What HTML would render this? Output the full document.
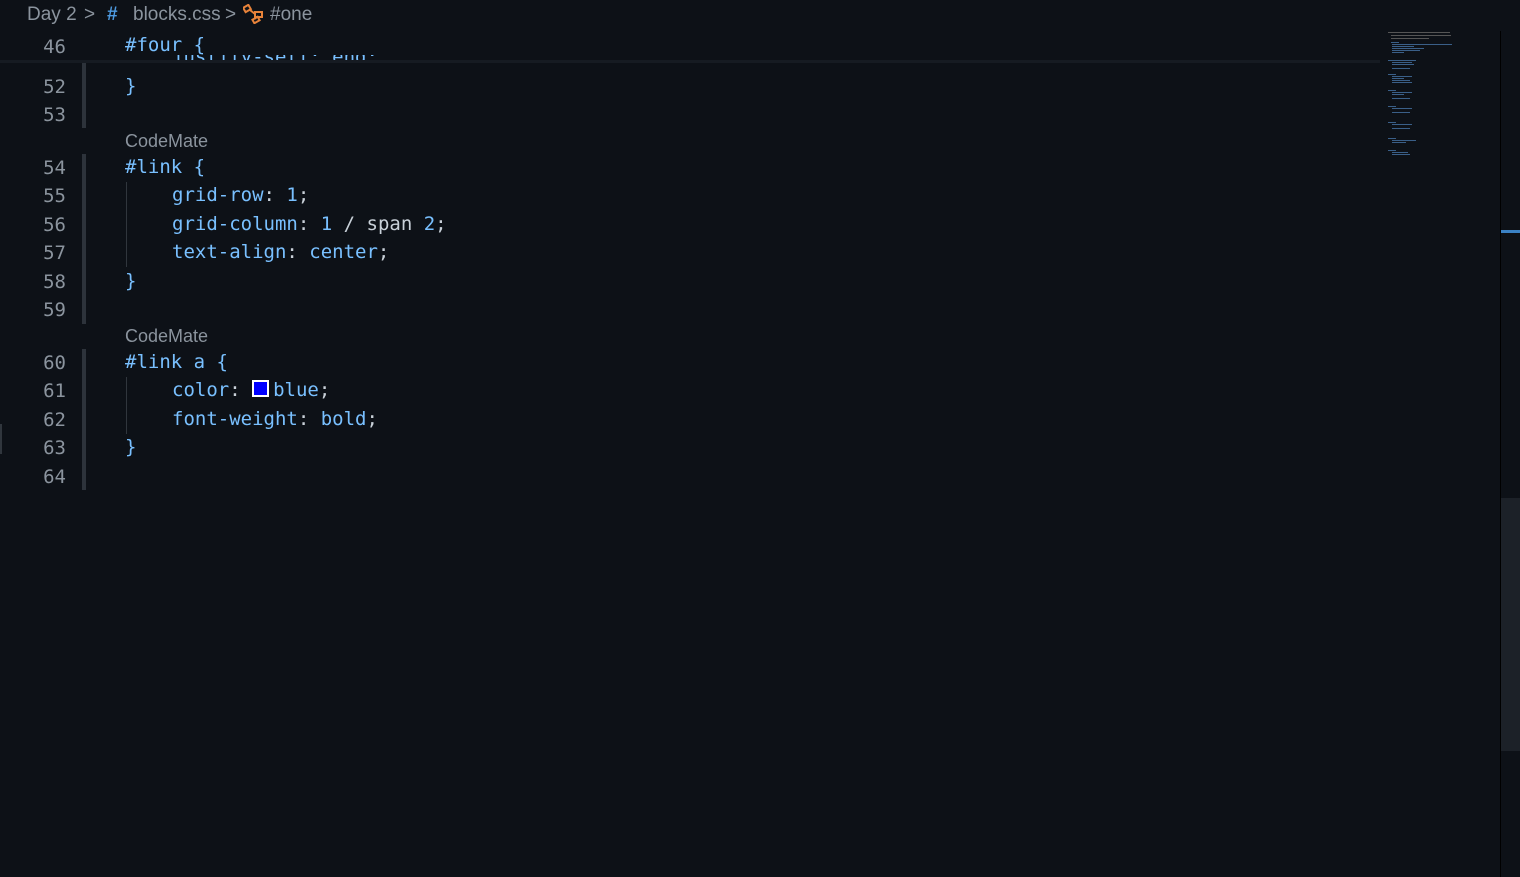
<!DOCTYPE html>
<html><head><style>
body{margin:0;width:1520px;height:877px;background:#0d1117;overflow:hidden;position:relative;font-family:"DejaVu Sans Mono","Liberation Mono",monospace;}
.bc{position:absolute;top:4px;font:19px "Liberation Sans",sans-serif;color:#8b949e;white-space:pre;}
.ln{position:absolute;left:20px;width:46px;text-align:right;font-size:19px;color:#8b949e;}
.c{position:absolute;left:125px;font-size:19px;white-space:pre;color:#c9d1d9;}
.s{color:#79c0ff}.p{color:#79c0ff}.v{color:#79c0ff}
.cm{position:absolute;left:125px;font:18px "Liberation Sans",sans-serif;color:#8b949e;}
.bar{position:absolute;left:82px;width:4px;background:#2d333b;}
.g{position:absolute;left:126px;width:1px;background:#30363d;}
.mm{position:absolute;height:1px;background:#3a5f88;}
</style></head><body>
<div class="c" style="left:172px;top:46px;color:#79c0ff">justify-self: end;</div>
<div style="position:absolute;left:0;top:0;width:1380px;height:55px;background:#0d1117"></div>
<div style="position:absolute;left:0;right:140px;top:60px;height:3px;background:#161b22"></div>
<div style="position:absolute;left:0;right:140px;top:63px;height:20px;background:#0d1117"></div>
<div class="bc" style="left:27px">Day 2</div>
<div class="bc" style="left:84px">&gt;</div>
<div class="bc" style="left:107px;color:#4d9ae0;font-weight:bold">#</div>
<div class="bc" style="left:133px">blocks.css</div>
<div class="bc" style="left:225px">&gt;</div>
<svg style="position:absolute;left:243px;top:4px" width="22" height="20" viewBox="0 0 22 20" fill="none" stroke="#e8833a" stroke-width="2"><rect x="1" y="2" width="6" height="5" transform="rotate(-30 4 4.5)"/><rect x="12" y="8" width="7" height="5"/><rect x="10" y="14" width="6" height="4" transform="rotate(-30 13 16)"/><path d="M7 6 L12 10 M13 13 L12 15"/></svg>
<div class="bc" style="left:270px">#one</div>
<div class="ln" style="top:36px">46</div><div class="c s" style="top:34px">#four {</div>
<div class="bar" style="top:63px;height:65px"></div>
<div class="ln" style="top:76px">52</div><div class="c" style="top:75px;color:#79c0ff">}</div>
<div class="ln" style="top:104px">53</div>
<div class="cm" style="top:131px">CodeMate</div>
<div class="bar" style="top:154px;height:170px"></div>
<div class="g" style="top:182px;height:85px"></div>
<div class="ln" style="top:157px">54</div><div class="c s" style="top:156px">#link {</div>
<div class="ln" style="top:185px">55</div><div class="c" style="top:184px;left:172px"><span class="p">grid-row</span>: <span class="v">1</span>;</div>
<div class="ln" style="top:214px">56</div><div class="c" style="top:213px;left:172px"><span class="p">grid-column</span>: <span class="v">1</span> / span <span class="v">2</span>;</div>
<div class="ln" style="top:242px">57</div><div class="c" style="top:241px;left:172px"><span class="p">text-align</span>: <span class="v">center</span>;</div>
<div class="ln" style="top:271px">58</div><div class="c" style="top:270px;color:#79c0ff">}</div>
<div class="ln" style="top:299px">59</div>
<div class="cm" style="top:326px">CodeMate</div>
<div class="bar" style="top:349px;height:141px"></div>
<div class="g" style="top:377px;height:57px"></div>
<div class="ln" style="top:352px">60</div><div class="c s" style="top:351px">#link a {</div>
<div class="ln" style="top:380px">61</div><div class="c" style="top:379px;left:172px"><span class="p">color</span>: <span style="display:inline-block;width:13px;height:13px;background:#00f;border:2px solid #fff;vertical-align:-1px;margin-right:4px"></span><span class="v">blue</span>;</div>
<div class="ln" style="top:409px">62</div><div class="c" style="top:408px;left:172px"><span class="p">font-weight</span>: <span class="v">bold</span>;</div>
<div class="ln" style="top:437px">63</div><div class="c" style="top:436px;color:#79c0ff">}</div>
<div class="ln" style="top:466px">64</div>
<div class="mm" style="left:1388px;top:32px;width:62px;background:#555"></div>
<div class="mm" style="left:1391px;top:35px;width:60px;background:#555"></div>
<div class="mm" style="left:1391px;top:38px;width:38px;background:#555"></div>
<div class="mm" style="left:1391px;top:42px;width:8px"></div>
<div class="mm" style="left:1392px;top:44px;width:60px"></div>
<div class="mm" style="left:1392px;top:46px;width:22px"></div>
<div class="mm" style="left:1392px;top:48px;width:32px"></div>
<div class="mm" style="left:1392px;top:50px;width:28px"></div>
<div class="mm" style="left:1392px;top:52px;width:12px"></div>
<div class="mm" style="left:1388px;top:60px;width:28px"></div>
<div class="mm" style="left:1392px;top:62px;width:20px"></div>
<div class="mm" style="left:1392px;top:64px;width:22px"></div>
<div class="mm" style="left:1392px;top:68px;width:18px"></div>
<div class="mm" style="left:1388px;top:74px;width:8px"></div>
<div class="mm" style="left:1392px;top:76px;width:20px"></div>
<div class="mm" style="left:1392px;top:78px;width:12px"></div>
<div class="mm" style="left:1392px;top:80px;width:18px"></div>
<div class="mm" style="left:1392px;top:82px;width:20px"></div>
<div class="mm" style="left:1388px;top:90px;width:8px"></div>
<div class="mm" style="left:1392px;top:92px;width:20px"></div>
<div class="mm" style="left:1392px;top:94px;width:12px"></div>
<div class="mm" style="left:1392px;top:98px;width:18px"></div>
<div class="mm" style="left:1388px;top:106px;width:8px"></div>
<div class="mm" style="left:1392px;top:108px;width:20px"></div>
<div class="mm" style="left:1392px;top:112px;width:18px"></div>
<div class="mm" style="left:1388px;top:122px;width:8px"></div>
<div class="mm" style="left:1392px;top:124px;width:20px"></div>
<div class="mm" style="left:1392px;top:128px;width:18px"></div>
<div class="mm" style="left:1388px;top:138px;width:8px"></div>
<div class="mm" style="left:1392px;top:140px;width:24px"></div>
<div class="mm" style="left:1392px;top:142px;width:14px"></div>
<div class="mm" style="left:1388px;top:150px;width:8px"></div>
<div class="mm" style="left:1392px;top:152px;width:16px"></div>
<div class="mm" style="left:1392px;top:154px;width:18px"></div>
<div style="position:absolute;left:1500px;top:31px;width:1px;height:846px;background:#000"></div>
<div style="position:absolute;left:1501px;top:230px;width:19px;height:3px;background:#3b82c4"></div>
<div style="position:absolute;left:1501px;top:498px;width:19px;height:253px;background:#1c2128"></div>
<div style="position:absolute;left:0;top:424px;width:2px;height:30px;background:#30363d"></div>
</body></html>
